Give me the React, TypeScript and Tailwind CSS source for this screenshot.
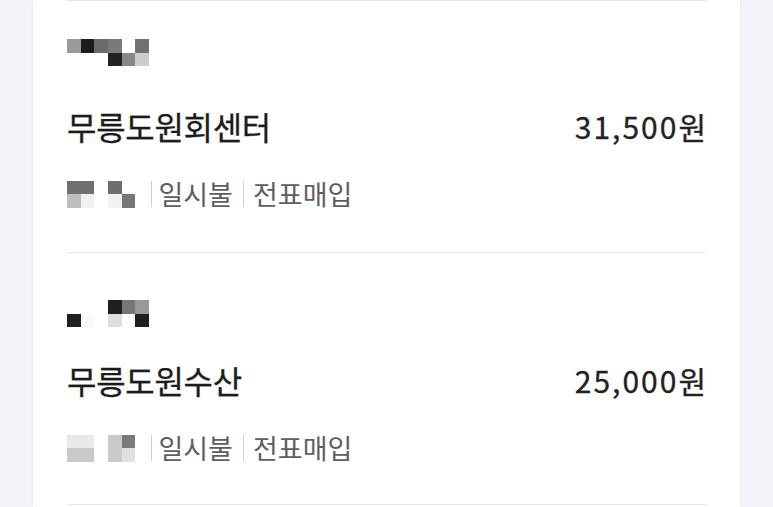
import React from "react";

type Cell = string | null;

const Mosaic = ({ rows, cols }: { rows: Cell[][]; cols: number }) => (
  <div className="flex flex-col">
    {rows.map((r, i) => (
      <div key={i} className="flex">
        {Array.from({ length: cols }).map((_, j) => (
          <div
            key={j}
            className="w-[13.7px] h-[13.5px]"
            style={{ backgroundColor: r[j] ?? "transparent" }}
          />
        ))}
      </div>
    ))}
  </div>
);

type Item = {
  top: Cell[][];
  name: string;
  amount: string;
  sub: Cell[][];
  topPad: string;
  gapTitle: string;
};

const items: Item[] = [
  {
    top: [
      ["#9a9a9a", "#1c1c1c", "#6b6b6b", "#7a7a7a", null, "#717171"],
      [null, null, null, "#222222", "#888888", "#cdcdcd"],
    ],
    name: "무릉도원회센터",
    amount: "31,500원",
    sub: [
      ["#707070", "#707070", null, "#6e6e6e", null],
      ["#bdbdbd", "#f0f0f0", null, "#f2f2f2", "#777777"],
    ],
    topPad: "pt-[38px]",
    gapTitle: "mt-[40px]",
  },
  {
    top: [
      [null, null, null, "#1f1f1f", "#777777", "#999999"],
      ["#1f1f1f", "#fafafa", null, "#dedede", null, "#1f1f1f"],
    ],
    name: "무릉도원수산",
    amount: "25,000원",
    sub: [
      ["#e9e9e9", "#e9e9e9", null, "#cacaca", "#7a7a7a"],
      ["#c9c9c9", "#c9c9c9", null, "#cacaca", "#e0e0e0"],
    ],
    topPad: "pt-[47px]",
    gapTitle: "mt-[33px]",
  },
];

export default function App() {
  return (
    <div
      className="w-[773px] h-[507px] overflow-hidden bg-[#f3f3f7] flex justify-center"
      style={{ fontFamily: '"Noto Sans CJK KR", "Noto Sans", sans-serif' }}
    >
      <div className="w-[707px] bg-white shadow-[0_0_3px_rgba(0,0,0,0.06)] h-full">
        <div className="mx-[34px] h-px bg-[#e6e6e6]" />
        {items.map((it, idx) => (
          <div key={idx} className={`mx-[34px] border-b border-[#e8e8e8] h-[252px] ${it.topPad}`}>
            <Mosaic rows={it.top} cols={6} />
            <div className={`flex items-center justify-between ${it.gapTitle} h-[40px]`}>
              <span className="text-[32px] leading-[40px] font-normal text-[#1c1c1c] tracking-[-0.3px] [-webkit-text-stroke:0.3px_#1c1c1c]">
                {it.name}
              </span>
              <span className="text-[30px] leading-[40px] font-normal text-[#222] tracking-[2px] mr-[-2px] [-webkit-text-stroke:0.3px_#222]">
                {it.amount}
              </span>
            </div>
            <div className="flex items-center mt-[31px] h-[34px]">
              <Mosaic rows={it.sub} cols={5} />
              <span className="inline-block w-px h-[26px] bg-[#cfcfcf] ml-[16px] mr-[6px]" />
              <span className="text-[27px] leading-[34px] text-[#5e5e5e]">일시불</span>
              <span className="inline-block w-px h-[26px] bg-[#cfcfcf] ml-[10px] mr-[9px]" />
              <span className="text-[27px] leading-[34px] text-[#5e5e5e]">전표매입</span>
            </div>
          </div>
        ))}
      </div>
    </div>
  );
}
